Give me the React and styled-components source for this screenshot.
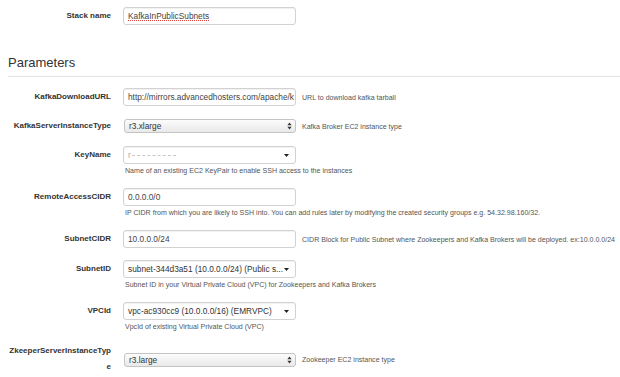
import React from 'react'
import styled, { createGlobalStyle } from 'styled-components'

const GlobalStyle = createGlobalStyle`
  body {
    margin: 0;
    background: #fff;
    font-family: "Liberation Sans", Arial, sans-serif;
  }
`

// petites icônes des listes déroulantes
const UpDown = () => (
  <svg width="5" height="8" viewBox="0 0 5 8">
    <path d="M2.5 0.5 L4.6 3.2 H0.4 Z" fill="#333" />
    <path d="M2.5 7.5 L4.6 4.8 H0.4 Z" fill="#333" />
  </svg>
)

const Caret = () => (
  <svg width="5" height="3" viewBox="0 0 5 3">
    <path d="M0 0 H5 L2.5 3 Z" fill="#222" />
  </svg>
)

function Field({ label, children, help, desc, wrap }) {
  return (
    <Row>
      <Label $wrap={wrap}>{label}</Label>
      {children}
      {help && <Help>{help}</Help>}
      {desc && <Desc>{desc}</Desc>}
    </Row>
  )
}

function App() {
  return (
    <Page>
      <GlobalStyle />
      <Row $gap={30}>
        <Label>Stack name</Label>
        <TextBox>
          <Misspelled>KafkaInPublicSubnets</Misspelled>
        </TextBox>
      </Row>

      <Heading>Parameters</Heading>

      <Field label="KafkaDownloadURL" help="URL to download kafka tarball">
        <TextBox>http://mirrors.advancedhosters.com/apache/k</TextBox>
      </Field>

      <Field label="KafkaServerInstanceType" help="Kafka Broker EC2 instance type">
        <NativeSelect>
          <span>r3.xlarge</span>
          <UpDown />
        </NativeSelect>
      </Field>

      <Field label="KeyName" desc="Name of an existing EC2 KeyPair to enable SSH access to the instances">
        <Dropdown>
          <span>
            <Hidden>r</Hidden>
            <Redacted />
          </span>
          <Caret />
        </Dropdown>
      </Field>

      <Field
        label="RemoteAccessCIDR"
        desc="IP CIDR from which you are likely to SSH into. You can add rules later by modifying the created security groups e.g. 54.32.98.160/32."
      >
        <TextBox>0.0.0.0/0</TextBox>
      </Field>

      <Field
        label="SubnetCIDR"
        help="CIDR Block for Public Subnet where Zookeepers and Kafka Brokers will be deployed. ex:10.0.0.0/24"
      >
        <TextBox>10.0.0.0/24</TextBox>
      </Field>

      <Field label="SubnetID" desc="Subnet ID in your Virtual Private Cloud (VPC) for Zookeepers and Kafka Brokers">
        <Dropdown>
          <span>subnet-344d3a51 (10.0.0.0/24) (Public s...</span>
          <Caret />
        </Dropdown>
      </Field>

      <Field label="VPCId" desc="VpcId of existing Virtual Private Cloud (VPC)">
        <Dropdown>
          <span>vpc-ac930cc9 (10.0.0.0/16) (EMRVPC)</span>
          <Caret />
        </Dropdown>
      </Field>

      <Field label="ZkeeperServerInstanceType" help="Zookeeper EC2 instance type" wrap>
        <NativeSelect>
          <span>r3.large</span>
          <UpDown />
        </NativeSelect>
      </Field>
    </Page>
  )
}

export default App

const Page = styled.div`
  padding: 7px 0 0 7px;
  width: 613px;
`

// une ligne du formulaire : label | champ | aide
const Row = styled.div`
  display: grid;
  grid-template-columns: 116px 173px 1fr;
  align-items: center;
  margin-bottom: ${p => p.$gap ?? 12}px;
`

const Label = styled.div`
  box-sizing: border-box;
  padding-right: 12px;
  text-align: right;
  font-size: 8px;
  font-weight: bold;
  color: #333;
  line-height: 16px;
  overflow-wrap: anywhere;
  align-self: ${p => (p.$wrap ? 'start' : 'center')};
  margin-top: ${p => (p.$wrap ? '-1px' : '0')};
`

const Heading = styled.h3`
  margin: 0 0 11px 1px;
  padding-bottom: 6px;
  font-size: 13px;
  line-height: 15px;
  font-weight: normal;
  color: #333;
  border-bottom: 1px solid #e2e2e2;
`

const TextBox = styled.div`
  box-sizing: border-box;
  height: 18px;
  padding: 0 4px;
  border: 1px solid #d2d2d2;
  border-radius: 3px;
  background: #fff;
  box-shadow: inset 0 1px 1px rgba(0, 0, 0, 0.06);
  font-size: 8.3px;
  line-height: 16px;
  color: #444;
  white-space: nowrap;
  overflow: hidden;
`

const Dropdown = styled(TextBox)`
  display: flex;
  align-items: center;
  justify-content: space-between;
  padding-right: 6px;
  color: #333;
`

const NativeSelect = styled.div`
  box-sizing: border-box;
  height: 14px;
  margin-left: 1px;
  padding: 0 3px 0 4px;
  display: flex;
  align-items: center;
  justify-content: space-between;
  border: 1px solid #c4c4c4;
  border-radius: 3px;
  background: linear-gradient(#fcfcfc, #e9e9e9);
  font-size: 8.3px;
  color: #333;
  white-space: nowrap;
`

const Misspelled = styled.span`
  text-decoration: underline dotted #e04040;
  text-underline-offset: 1px;
`

const Hidden = styled.span`
  color: #aaa;
`

const Redacted = styled.span`
  display: inline-block;
  width: 44px;
  margin-left: 1px;
  border-top: 1px dashed #c8c8c8;
  vertical-align: middle;
`

const Help = styled.div`
  padding-left: 6px;
  font-size: 7.05px;
  color: #555;
  white-space: nowrap;
`

const Desc = styled.div`
  grid-column: 2 / 4;
  margin-top: 2px;
  padding-left: 2px;
  font-size: 7.05px;
  line-height: 10px;
  color: #555;
  white-space: nowrap;
`
